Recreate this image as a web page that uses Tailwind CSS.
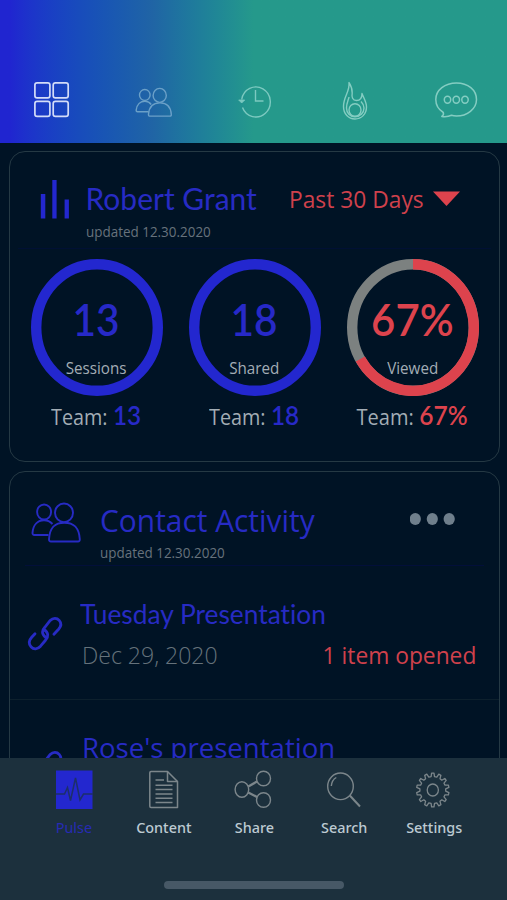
<!DOCTYPE html>
<html lang="en">
<head>
  <meta charset="UTF-8">
  <title>Pulse</title>
  <meta name="viewport" content="width=device-width, initial-scale=1.0">
  <script src="https://cdn.jsdelivr.net/npm/@tailwindcss/browser@4"></script>
</head>
<body class="bg-[#001325] font-['Open_Sans',sans-serif]">
  <div class="w-[507px] h-[900px] flex flex-col overflow-hidden">
    <!-- top tabs -->
    <header class="h-[143px] shrink-0 pt-[77px] grid grid-cols-[102px_102px_101px_100px_102px] justify-items-center content-start bg-linear-to-r from-[#2025d0] from-[2%] via-[#2064a5] via-[30%] to-[#25998b] to-[50%]">
      <svg class="size-[46px]" viewBox="0 0 46 46" fill="none" stroke="#d3dcf8" stroke-width="1.7">
        <rect x="6.9" y="5.9" width="15" height="15" rx="2.2"/>
        <rect x="25.2" y="5.9" width="15" height="15" rx="2.2"/>
        <rect x="6.9" y="24.4" width="15" height="15" rx="2.2"/>
        <rect x="25.2" y="24.4" width="15" height="15" rx="2.2"/>
      </svg>
      <svg class="size-[46px]" viewBox="0 0 46 46" fill="none" stroke="#6ba0c8" stroke-width="1.4">
        <ellipse cx="14.800" cy="18" rx="5.3" ry="5.5"/>
        <ellipse cx="29.700" cy="18.4" rx="6.6" ry="7"/>
        <path d="M18.600 34.7H7.5q-1.500 0-1.300-1.600C6.800 27.500 10.500 24.300 15 24.300q4 0 6.200 3.200"/>
        <path d="M20 39.100h20q1.400 0 1.300-1.600C40.800 29.500 36.500 25.900 30 25.900S19 29.500 18.500 37.500q-.100 1.600 1.500 1.600z"/>
      </svg>
      <svg class="size-[46px]" viewBox="0 0 46 46" fill="none" stroke="#7cc9c0" stroke-width="1.4">
        <path d="M9.700 22.500A14.400 15 0 1 1 10.500 30.500"/>
        <path d="M23.500 13v11h8"/>
        <path d="M6.700 23h6l-3 3z" fill="#7cc9c0" stroke-width=".8"/>
      </svg>
      <svg class="size-[46px]" viewBox="0 0 46 46" fill="none" stroke="#84cdc2" stroke-width="1.4" stroke-linejoin="round">
        <path d="M17 5.500C18 15 11.500 19 11.500 29.500C11.500 37 16.500 42 23 42S34.500 37 34.500 30C34.500 25 31.500 20.500 30 16.500C30 21 28.300 23.500 24.500 23.500C20.500 23.500 19.500 20 20.200 16C20.500 11 18.500 8 17 5.500z"/>
        <path d="M17 20C16.500 23 14.500 26 14.500 31C14.500 36 18 39.800 23 39.800S32 36 32 31C32 28 30.500 26 29 24.500"/>
        <ellipse cx="23" cy="33" rx="6" ry="6.300"/>
      </svg>
      <svg class="size-[46px]" viewBox="0 0 46 46" fill="none" stroke="#84cdc2" stroke-width="1.5" stroke-linejoin="round">
        <path d="M8.800 39.500q2.300-1.500 1.500-4C5.500 32.500 2.800 28 2.800 22.500C2.800 13 12 6 23.500 6S43.500 13 43.500 22.500S34 39 23.500 39q-3 0-5-.7q-4 1.900-9.700 1.200z"/>
        <ellipse cx="14.500" cy="22.800" rx="3.200" ry="3.500"/>
        <ellipse cx="23.300" cy="22.800" rx="3.200" ry="3.500"/>
        <ellipse cx="32" cy="22.800" rx="3.200" ry="3.500"/>
      </svg>
    </header>

    <main class="h-[615px] shrink-0 pl-[8.5px] pt-2 flex flex-col gap-[9px] overflow-hidden">
      <!-- summary card -->
      <section class="w-[491px] h-[311px] shrink-0 border-[1.5px] border-[#253944] rounded-2xl px-[8px]">
        <div class="h-[97px] flex border-b border-[#001034]">
          <svg class="w-[68px] h-[96px] shrink-0" viewBox="0 0 68 96" fill="#2327cf">
            <rect x="22.800" y="42" width="4.500" height="24.500"/>
            <rect x="34.300" y="28" width="4.300" height="38.500"/>
            <rect x="46.600" y="47.500" width="4.300" height="19"/>
          </svg>
          <div class="w-[203px] pt-[31px]">
            <h1 class="origin-left whitespace-nowrap leading-none text-[30px] font-['Lato',sans-serif] text-[#272bc4]">Robert Grant</h1>
            <p class="mt-[12px] origin-left scale-x-[.96] whitespace-nowrap leading-none text-[14px] text-[#67727c]">updated 12.30.2020</p>
          </div>
          <div class="pt-[35px] flex">
            <span class="w-[144px] origin-left scale-x-[.93] whitespace-nowrap leading-none text-[24.5px] text-[#cf414c]">Past 30 Days</span>
            <svg class="w-[27px] h-[15px] mt-[4px]" viewBox="0 0 27 15" fill="#dd434d"><path d="M0 .5h27L13.500 15z"/></svg>
          </div>
        </div>

        <div class="mt-[10px] grid grid-cols-[158px_158px_158px]">
          <div class="flex flex-col items-center">
            <div class="relative w-[132px] h-[137px] flex flex-col items-center">
              <svg class="absolute inset-0" width="132" height="137" viewBox="0 0 132 137" fill="none" stroke-width="10.400">
                <ellipse cx="66" cy="68.500" rx="60.800" ry="63.300" stroke="#2327cf"/>
              </svg>
              <span class="mt-[38px] scale-x-[.9] leading-none text-[45px] font-semibold font-['Lato',sans-serif] text-[#2729c8]">13</span>
              <span class="mt-[18px] scale-x-[.92] leading-none text-[16.500px] text-[#a3adb5]">Sessions</span>
            </div>
            <div class="mt-[5px] flex items-baseline gap-[6px] scale-x-[.9] leading-none whitespace-nowrap">
              <span class="text-[22px] leading-none text-[#a3adb5]">Team:</span>
              <span class="text-[27px] leading-none font-semibold font-['Lato',sans-serif] text-[#2729c8]">13</span>
            </div>
          </div>
          <div class="flex flex-col items-center">
            <div class="relative w-[132px] h-[137px] flex flex-col items-center">
              <svg class="absolute inset-0" width="132" height="137" viewBox="0 0 132 137" fill="none" stroke-width="10.400">
                <ellipse cx="66" cy="68.500" rx="60.800" ry="63.300" stroke="#2327cf"/>
              </svg>
              <span class="mt-[38px] scale-x-[.9] leading-none text-[45px] font-semibold font-['Lato',sans-serif] text-[#2729c8]">18</span>
              <span class="mt-[18px] scale-x-[.92] leading-none text-[16.500px] text-[#a3adb5]">Shared</span>
            </div>
            <div class="mt-[5px] flex items-baseline gap-[6px] scale-x-[.9] leading-none whitespace-nowrap">
              <span class="text-[22px] leading-none text-[#a3adb5]">Team:</span>
              <span class="text-[27px] leading-none font-semibold font-['Lato',sans-serif] text-[#2729c8]">18</span>
            </div>
          </div>
          <div class="flex flex-col items-center">
            <div class="relative w-[132px] h-[137px] flex flex-col items-center">
              <svg class="absolute inset-0" width="132" height="137" viewBox="0 0 132 137" fill="none" stroke-width="10.400">
                <ellipse cx="66" cy="68.500" rx="60.800" ry="63.300" stroke="#7c8180"/>
                <path d="M66 5.200A60.800 63.300 0 1 1 13.300 100.100" stroke="#dd434d"/>
              </svg>
              <span class="mt-[38px] scale-x-[.93] leading-none text-[45px] font-semibold font-['Lato',sans-serif] text-[#dd434d]">67%</span>
              <span class="mt-[18px] scale-x-[.92] leading-none text-[16.500px] text-[#a3adb5]">Viewed</span>
            </div>
            <div class="mt-[5px] flex items-baseline gap-[6px] scale-x-[.91] leading-none whitespace-nowrap">
              <span class="text-[22px] leading-none text-[#a3adb5]">Team:</span>
              <span class="text-[27px] leading-none font-semibold font-['Lato',sans-serif] text-[#dd434d]">67%</span>
            </div>
          </div>
        </div>
      </section>

      <!-- contact activity card -->
      <section class="w-[491px] h-[311px] shrink-0 border-[1.5px] border-[#253944] rounded-2xl">
        <div class="mx-[15px] h-[94px] flex border-b border-[#020f3a]">
          <svg class="w-[75px] h-[92px] shrink-0" viewBox="0 0 75 92" fill="none" stroke="#272bc4" stroke-width="1.900">
            <ellipse cx="19.100" cy="40" rx="7" ry="7.500"/>
            <ellipse cx="39" cy="40.800" rx="9" ry="9.300"/>
            <path d="M23.500 63H9.500q-2.200 0-2-2.200C8.200 52.500 13 48.300 19 48.300q5 0 8.500 3.700"/>
            <path d="M26 69.500h27q1.900 0 1.800-2.200C54 55 48.500 50.800 39.300 50.800S24.800 55 24 67.300q-.100 2.200 2 2.200z"/>
          </svg>
          <div class="w-[310px] pt-[33px]">
            <h2 class="origin-left scale-x-[.98] whitespace-nowrap leading-none text-[30.500px] text-[#272bc4]">Contact Activity</h2>
            <p class="mt-[10px] origin-left scale-x-[.96] whitespace-nowrap leading-none text-[14px] text-[#67727c]">updated 12.30.2020</p>
          </div>
          <svg class="w-[46px] h-[12px] mt-[41px]" viewBox="0 0 46 12" fill="#6f7f8c">
            <ellipse cx="5.300" cy="6" rx="5.600" ry="5.900"/>
            <ellipse cx="22.300" cy="6" rx="5.600" ry="5.900"/>
            <ellipse cx="39.200" cy="6" rx="5.600" ry="5.900"/>
          </svg>
        </div>
        <div class="h-[134px] flex border-b border-[#0d202d]">
          <svg class="w-[70px] h-[134px] shrink-0" viewBox="0 0 70 134" fill="none" stroke="#272bc4" stroke-width="2.800" stroke-linecap="round">
            <path d="M35.600 71.300C31.200 67.800 32 64.200 35 61L40.200 54.500C43 51.500 47 51.800 49.200 54.300C51.500 57 51.300 60 48.800 63L43.900 68.300"/>
            <path d="M33.900 63.500C38.500 66.500 39 70.500 35.300 74.500L30.500 80.200C27.500 83.500 23.500 83.500 21.200 81C18.500 78 18.800 74.500 21.500 71.500L25 67.700"/>
          </svg>
          <div class="grow pt-[34px]">
            <h3 class="origin-left scale-x-[.975] whitespace-nowrap leading-none text-[27px] font-['Lato',sans-serif] [font-variant-ligatures:none] text-[#272bc4]">Tuesday Presentation</h3>
            <div class="mt-[16px] pl-[2px] flex justify-between pr-[22px] leading-none whitespace-nowrap text-[24.500px]">
              <span class="origin-left scale-x-[.94] font-light text-[#65727b]">Dec 29, 2020</span>
              <span class="origin-right scale-x-[.93] text-[#cf414c]">1 item opened</span>
            </div>
          </div>
        </div>
        <div class="h-[134px] flex">
          <svg class="w-[70px] h-[134px] shrink-0" viewBox="0 0 70 134" fill="none" stroke="#272bc4" stroke-width="2.800" stroke-linecap="round">
            <path d="M35.600 71.300C31.200 67.800 32 64.200 35 61L40.200 54.500C43 51.500 47 51.800 49.200 54.300C51.500 57 51.300 60 48.800 63L43.900 68.300"/>
          </svg>
          <h3 class="pt-[33px] pl-[2px] origin-left scale-x-[.985] whitespace-nowrap leading-none text-[28px] text-[#272bc4]">Rose's presentation</h3>
        </div>
      </section>
    </main>

    <!-- bottom navigation -->
    <nav class="h-[142px] shrink-0 bg-[#1c303d] pt-[10px] flex flex-col items-center">
      <div class="w-[450px] ml-[1px] grid grid-cols-5 justify-items-center text-[15px] leading-none font-medium font-['Noto_Sans',sans-serif] text-[#bdcad2]">
        <div class="flex flex-col items-center gap-[10px] text-[#272bb4]">
          <svg class="size-[42px]" viewBox="0 0 42 42" fill="none">
            <rect x="3" y="2.500" width="36.500" height="38.500" fill="#2327cf"/>
            <path d="M3 26h8.500l3-6.500 3 13L22.500 10l4.500 22 3.500-6H40" stroke="#1d2f6a" stroke-width="1.500"/>
          </svg>
          <span class="scale-x-[.96] font-normal">Pulse</span>
        </div>
        <div class="flex flex-col items-center gap-[10px]">
          <svg class="size-[42px]" viewBox="0 0 42 42" fill="none" stroke="#7c868b" stroke-width="1.500" stroke-linejoin="round">
            <path d="M8 3.500h16.500L34.500 13.500v26H8q-1.200 0-1.200-1.200v-33.600q0-1.200 1.200-1.200z"/>
            <path d="M24.500 3.500v10h10M12.500 12h8.500M12.500 17.300h17M12.500 21.600h17M12.500 25.900h17M12.500 30.200h17M12.500 34.500h17"/>
          </svg>
          <span class="scale-x-[.96]">Content</span>
        </div>
        <div class="flex flex-col items-center gap-[10px]">
          <svg class="size-[42px]" viewBox="0 0 42 42" fill="none" stroke="#7c868b" stroke-width="1.400">
            <ellipse cx="8.900" cy="21.500" rx="6.800" ry="7.800"/>
            <ellipse cx="30.500" cy="10.500" rx="7" ry="7.300"/>
            <ellipse cx="30.500" cy="32" rx="7" ry="7.300"/>
            <path d="M15.300 18.500L24 13.500M15.300 24.500L24 29" stroke-width="2.400"/>
          </svg>
          <span class="scale-x-[.96]">Share</span>
        </div>
        <div class="flex flex-col items-center gap-[10px]">
          <svg class="size-[42px]" viewBox="0 0 42 42" fill="none" stroke="#7c868b" stroke-width="1.400">
            <ellipse cx="17.500" cy="18.300" rx="12.800" ry="13.300"/>
            <path d="M8.300 18q.500-6 5-8.500"/>
            <path d="M26.800 27.500l10.200 11" stroke-width="2"/>
          </svg>
          <span class="scale-x-[.96]">Search</span>
        </div>
        <div class="flex flex-col items-center gap-[10px]">
          <svg class="size-[42px]" viewBox="0 0 42 42" fill="none" stroke="#7c868b" stroke-width="1.300" stroke-linejoin="round">
            <path id="gear"/>
            <ellipse cx="19.800" cy="22" rx="5.600" ry="6"/>
          </svg>
          <span class="scale-x-[.96]">Settings</span>
        </div>
      </div>
      <div class="mt-[46px] w-[180px] h-[8px] rounded-full bg-[#475866]"></div>
    </nav>
  </div>

  <script>
    // gear outline, 14 teeth
    const teeth = 14;
    const pts = [];
    for (let i = 0; i < teeth; i++) {
      [[-0.3, 13], [-0.16, 16.3], [0.16, 16.3], [0.3, 13]].forEach(([o, r]) => {
        const a = (i + o) * 2 * Math.PI / teeth - Math.PI / 2;
        pts.push((19.8 + r * Math.cos(a)).toFixed(1) + ' ' + (22 + r * 1.04 * Math.sin(a)).toFixed(1));
      });
    }
    document.getElementById('gear').setAttribute('d', 'M' + pts.join('L') + 'z');
  </script>
</body>
</html>
